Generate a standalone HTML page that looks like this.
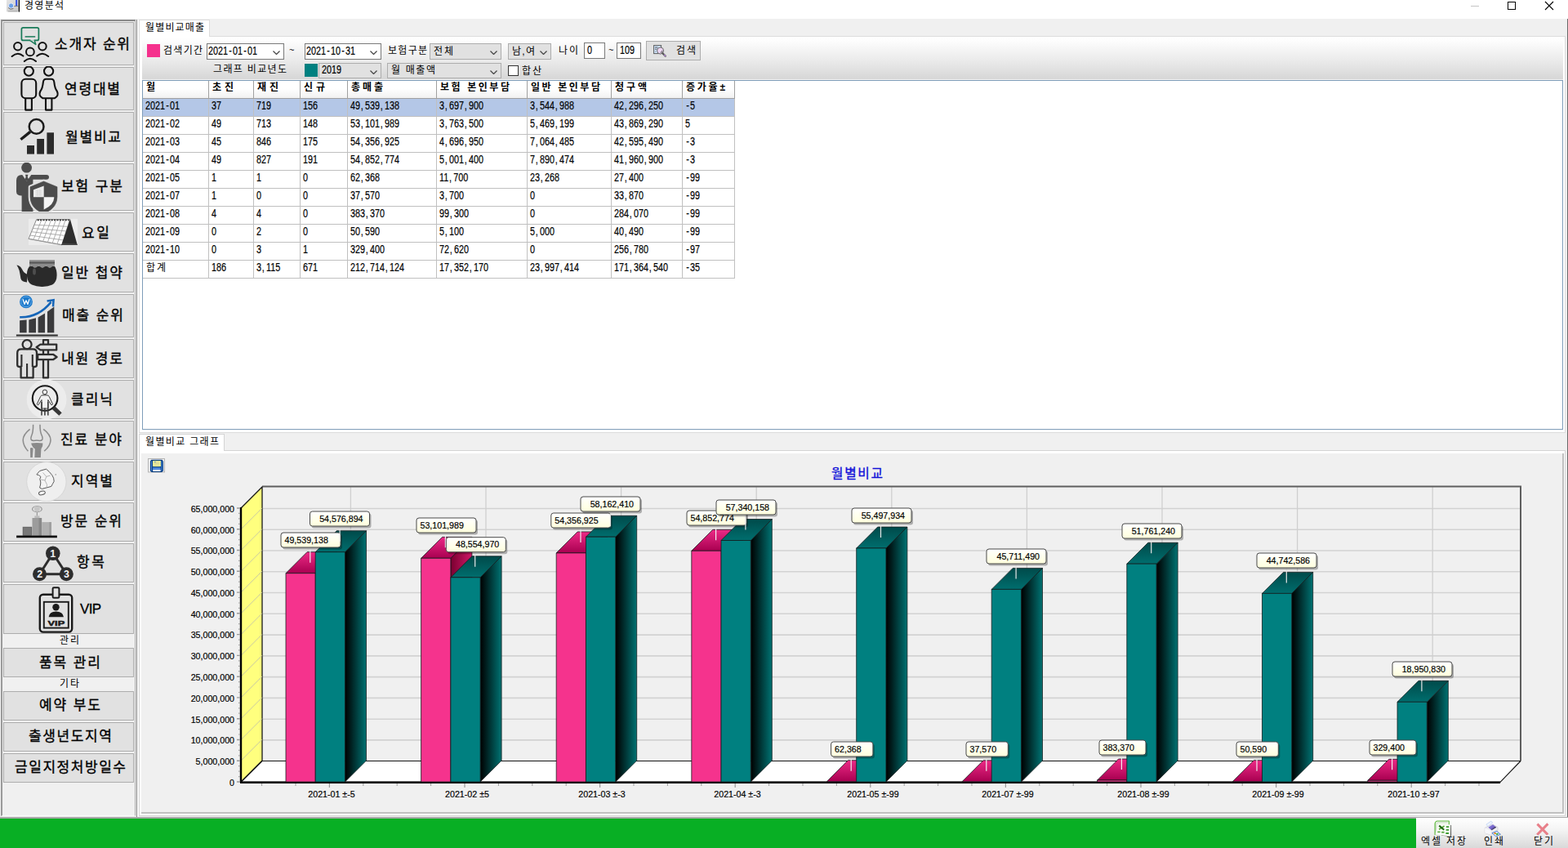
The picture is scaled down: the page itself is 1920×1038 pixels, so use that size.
<!DOCTYPE html><html><head><meta charset="utf-8"><title>경영분석</title><style>
*{box-sizing:border-box}
html,body{margin:0;padding:0}
html{overflow:hidden;width:1920px;height:1038px}
body{width:1920px;height:1038px;overflow:hidden;position:relative;background:#f0f0f0;font-family:"Liberation Sans",sans-serif;font-size:12px;color:#000}
.a{position:absolute}
.kt{position:absolute;overflow:visible;pointer-events:none}
.kt text{font-family:"Liberation Sans","Noto Sans CJK KR","NanumGothic",sans-serif;fill:#000;white-space:pre}
.btn{position:absolute;left:4px;width:160px;background:#e1e1e1;border:1px solid #adadad}
.cb{position:absolute;height:20px;border:1px solid #7a7a7a;background:#fff}
.cbg{position:absolute;border:1px solid #adadad;background:#e1e1e1}
.n{position:absolute;white-space:pre;font-size:14px;line-height:14px;-webkit-text-stroke:.2px #000;transform:scaleX(.771);transform-origin:0 0}
.n i{display:inline-block;width:7.78px;font-style:normal;text-align:center}
.n i.c{text-align:left;padding-left:1px}
.chev{position:absolute;width:9px;height:5px}
.th{position:absolute;top:0;height:22px;border-right:1px solid #a0a0a0;border-bottom:1px solid #a0a0a0;background:linear-gradient(#fff,#fff 45%,#f1f1f1)}
.row{position:absolute;left:0;width:725px;height:22px;border-bottom:1px solid #c0c0c0}
.cell{position:absolute;top:0;height:22px;border-right:1px solid #c0c0c0}
</style></head><body>
<div class="a" style="left:0;top:0;width:1920px;height:23px;background:#fff"></div>
<svg class="a" style="left:7px;top:0px" width="18" height="16" viewBox="7 0 18 16" ><defs><linearGradient id="tig" x1="0" x2="1" y1="0" y2="1"><stop offset="0" stop-color="#e6e6e6"/><stop offset="1" stop-color="#c4c4c4"/></linearGradient></defs><rect x="8" y="-1" width="15" height="15.6" rx="1" fill="url(#tig)"/><rect x="19.2" y="-1" width="2" height="8.4" fill="#3050e0"/><rect x="17.2" y="7" width="5" height="0.9" fill="#777"/><rect x="22.8" y="-1" width="1.2" height="15.6" fill="#000"/><circle cx="13.6" cy="7" r="3.1" fill="#6aa0e6" stroke="#f4f4ff" stroke-width=".8"/><path d="M10.2 9.5Q12.5 12.5 16.4 10.5" stroke="#666" stroke-width="1" fill="none"/><path d="M10 13.8H21.5" stroke="#aaa" stroke-width="1"/></svg>
<svg class="kt " role="img" aria-label="경영분석" style="left:26.6px;top:-1.0px" width="54" height="18" viewBox="0 0 54 18"><title>경영분석</title><text x="3" y="12" font-size="12" textLength="48" lengthAdjust="spacing">경영분석</text></svg>
<div class="a" style="left:1801px;top:7px;width:10px;height:1px;background:#c4c4c4"></div>
<div class="a" style="left:1846px;top:2px;width:10px;height:10px;border:1px solid #000"></div>
<svg class="a" style="left:1891px;top:1px" width="12" height="12" viewBox="0 0 12 12"><path d="M1 1L11 11M11 1L1 11" stroke="#000" stroke-width="1.1" fill="none"/></svg>
<div class="a" style="left:1918.8px;top:23px;width:1.2px;height:978px;background:#6a6a6a"></div>
<div class="a" style="left:1px;top:24px;width:165px;height:975px;border-left:2px solid #9a9a9a;border-top:2px solid #8a8a8a;border-right:1px solid #b0b0b0;border-bottom:1px solid #fafafa;background:#f0f0f0"></div>
<div class="a" style="left:166px;top:24px;width:1px;height:976px;background:#e8e8e8"></div>
<div class="a" style="left:167px;top:24px;width:1px;height:977px;background:#8a8a8a"></div>
<div class="a" style="left:168px;top:24px;width:2px;height:977px;background:#fafafa"></div>
<div class="a" style="left:0;top:1000px;width:1920px;height:2px;background:#a8a8a8"></div>
<div class="btn" style="top:27px;height:53px"></div>
<svg class="a" style="left:4px;top:26px" width="160" height="55" viewBox="4 26 160 55" ><defs><clipPath id="c_referrer"><rect x="4" y="26" width="160" height="55"/></clipPath></defs><g clip-path="url(#c_referrer)"><rect x="26.4" y="33.8" width="21" height="15.6" rx="2" fill="none" stroke="#187a58" stroke-width="1.7"/><path d="M36.6 49.4L43.8 54.4L42.2 49.4" fill="#e1e1e1" stroke="#187a58" stroke-width="1.5" stroke-linejoin="round"/><path d="M37.4 48.6H41.6" stroke="#e1e1e1" stroke-width="1.8"/><path d="M30.6 44.9H43.2" stroke="#187a58" stroke-width="1.5"/><circle cx="21.8" cy="56.8" r="4.7" fill="none" stroke="#111" stroke-width="2" stroke-linecap="round"/><circle cx="52" cy="56.8" r="4.7" fill="none" stroke="#111" stroke-width="2" stroke-linecap="round"/><circle cx="36.9" cy="63.4" r="4.9" fill="none" stroke="#111" stroke-width="2" stroke-linecap="round"/><path d="M14.6 69Q21.8 62.6 28.4 68.6" fill="none" stroke="#111" stroke-width="2" stroke-linecap="round"/><path d="M45.2 68.6Q52 62.6 59.2 69" fill="none" stroke="#111" stroke-width="2" stroke-linecap="round"/><path d="M29.8 75Q36.9 68.6 44 75" fill="none" stroke="#111" stroke-width="2" stroke-linecap="round"/></g></svg>
<svg class="kt " role="img" aria-label="소개자 순위" style="left:64.0px;top:44.3px" width="98" height="22" viewBox="0 0 98 22"><title>소개자 순위</title><text x="3" y="15.6" font-size="17" textLength="92" lengthAdjust="spacing" stroke="#000" stroke-width=".35">소개자 순위</text></svg>
<div class="btn" style="top:82px;height:53px"></div>
<svg class="a" style="left:4px;top:81px" width="160" height="55" viewBox="4 81 160 55" ><defs><clipPath id="c_age"><rect x="4" y="81" width="160" height="55"/></clipPath></defs><g clip-path="url(#c_age)"><circle cx="35.3" cy="87.1" r="5.6" fill="none" stroke="#111" stroke-width="2.1" stroke-linejoin="round"/><circle cx="59.6" cy="87.1" r="5.6" fill="none" stroke="#111" stroke-width="2.1" stroke-linejoin="round"/><rect x="26.4" y="96.8" width="17.8" height="23.4" rx="5" fill="none" stroke="#111" stroke-width="2.1" stroke-linejoin="round"/><path d="M31.2 120.2V134.6H38.9V120.2" fill="none" stroke="#111" stroke-width="2.1" stroke-linejoin="round"/><path d="M56.4 96.8H62.8Q66 96.8 66.4 101Q67 108 70 112Q72.4 117.4 66.8 120.2H52.4Q46.8 117.4 49.2 112Q52.2 108 52.8 101Q53.2 96.8 56.4 96.8Z" fill="none" stroke="#111" stroke-width="2.1" stroke-linejoin="round"/><path d="M56 120.2V134.6H63.4V120.2" fill="none" stroke="#111" stroke-width="2.1" stroke-linejoin="round"/></g></svg>
<svg class="kt " role="img" aria-label="연령대별" style="left:76.0px;top:98.9px" width="74" height="22" viewBox="0 0 74 22"><title>연령대별</title><text x="3" y="15.6" font-size="17" textLength="68" lengthAdjust="spacing" stroke="#000" stroke-width=".35">연령대별</text></svg>
<div class="btn" style="top:137px;height:61px"></div>
<svg class="a" style="left:4px;top:136px" width="160" height="63" viewBox="4 136 160 63" ><defs><clipPath id="c_monthly"><rect x="4" y="136" width="160" height="63"/></clipPath></defs><g clip-path="url(#c_monthly)"><circle cx="44.6" cy="154.9" r="8.9" fill="none" stroke="#1c1c1c" stroke-width="2.5"/><path d="M37 161.4L25.4 170.8" stroke="#1c1c1c" stroke-width="3.4" stroke-linecap="butt"/><rect x="33" y="178" width="9" height="10.6" fill="#2b2b2b"/><rect x="45.2" y="170" width="8.8" height="18.6" fill="#2b2b2b"/><rect x="57.4" y="162.3" width="8.6" height="26.3" fill="#2b2b2b"/></g></svg>
<svg class="kt " role="img" aria-label="월별비교" style="left:76.6px;top:157.7px" width="74" height="22" viewBox="0 0 74 22"><title>월별비교</title><text x="3" y="15.6" font-size="17" textLength="68" lengthAdjust="spacing" stroke="#000" stroke-width=".35">월별비교</text></svg>
<div class="btn" style="top:200px;height:58px"></div>
<svg class="a" style="left:4px;top:199px" width="160" height="60" viewBox="4 199 160 60" ><defs><clipPath id="c_insurance"><rect x="4" y="199" width="160" height="60"/></clipPath></defs><g clip-path="url(#c_insurance)"><circle cx="32.6" cy="205.2" r="6.4" fill="#4c4c4c"/><path d="M20 221Q20 213.9 27 213.9H57Q60 213.9 60 216.8Q60 219.8 57 219.8H40.4V259H26.6V239.6Q20 239.6 20 234.6Z" fill="#4c4c4c"/><path d="M26.9 213.6H38.6L32.7 222Z" fill="#e1e1e1"/><path d="M31 213.8H34.4L33.7 216.8L35.2 219.6L32.7 222L30.2 219.6L31.7 216.8Z" fill="#4c4c4c"/><path d="M53.5 222L70 228.8V241Q70 253 57.6 259.6H49.4Q37 253 37 241V228.8Z" fill="#e1e1e1" stroke="#e1e1e1" stroke-width="4.6" stroke-linejoin="round"/><path d="M53.5 222L70 228.8V241Q70 253 57.6 259.6H49.4Q37 253 37 241V228.8Z" fill="#4c4c4c" stroke="#4c4c4c" stroke-width=".6" stroke-linejoin="round"/><path d="M53.7 227.4L41 232.2V241.2H53.7Z" fill="#ececec"/><path d="M53.7 241.2H66.2V242.6Q65.6 250.6 55.4 255.6L53.7 256.4Z" fill="#f4f4f4"/><path d="M44 233.8H51.4M44 236.2H51.4M44 238.6H51.4M46 232.4V240M49 231.4V240" stroke="#d2d2d2" stroke-width=".7"/></g></svg>
<svg class="kt " role="img" aria-label="보험 구분" style="left:72.2px;top:218.4px" width="81" height="22" viewBox="0 0 81 22"><title>보험 구분</title><text x="3" y="15.6" font-size="17" textLength="75" lengthAdjust="spacing" stroke="#000" stroke-width=".35">보험 구분</text></svg>
<div class="btn" style="top:260px;height:48px"></div>
<svg class="a" style="left:4px;top:259px" width="160" height="50" viewBox="4 259 160 50" ><defs><clipPath id="c_calendar"><rect x="4" y="259" width="160" height="50"/></clipPath></defs><g clip-path="url(#c_calendar)"><rect x="34.9" y="267.9" width="60.2" height="32.1" fill="#ececec"/><path d="M44.7 268.6L85.6 268.6L75.8 299.8L35 292.4Z" fill="#fff" stroke="#7c7c7c" stroke-width=".9" stroke-linejoin="round"/><path d="M42.0 275.2L82.9 277.3M40.3 279.5L81.1 282.9M38.5 283.7L79.4 288.4M36.8 288.0L77.6 294.0M35.1 292.2L75.9 299.6M50.5 270.2L40.8 293.5M56.4 270.2L46.7 294.5M62.2 270.2L52.5 295.6M68.1 270.2L58.3 296.6M73.9 270.2L64.1 297.7M79.8 270.2L70.0 298.7" stroke="#9a9a9a" stroke-width=".8" fill="none"/><path d="M45.6 269.4H84.6" stroke="#3a3a3a" stroke-width="1.7" stroke-dasharray="2.2 1.2"/><path d="M85.9 268.3L94.8 300H75.2Z" fill="#2e2e2e"/><path d="M76.4 297.4L94 298.6L94.8 300H75.2Z" fill="#454545"/></g></svg>
<svg class="kt " role="img" aria-label="요일" style="left:97.4px;top:274.8px" width="40" height="22" viewBox="0 0 40 22"><title>요일</title><text x="3" y="15.6" font-size="17" textLength="34" lengthAdjust="spacing" stroke="#000" stroke-width=".35">요일</text></svg>
<div class="btn" style="top:310px;height:48px"></div>
<svg class="a" style="left:4px;top:309px" width="160" height="50" viewBox="4 309 160 50" ><defs><clipPath id="c_pot"><rect x="4" y="309" width="160" height="50"/></clipPath></defs><g clip-path="url(#c_pot)"><path d="M33.6 336Q29 334 27 329.5Q24.6 325 20.4 324.4Q22.4 327 23.6 331Q24.8 336.5 25.4 341Q27 345.5 33 345.4Z" fill="#2a2a2a"/><path d="M36 326Q32.4 331 33 338Q33.8 346 39 348.6Q45 351.2 52 351Q59 351 64 348.6Q69.6 345 69.6 337Q69.6 330 67 326Z" fill="#2a2a2a"/><ellipse cx="42" cy="332.6" rx="2" ry="4" fill="#4e4e4e"/><path d="M36 318.2H67V325.6Q64.6 325.2 62.6 327.2Q60.6 328.8 58.6 326.8Q56.4 324.8 54.2 326.8Q52 329 49.6 326.8Q47.4 324.8 45.2 326.8Q43 328.8 41 327Q38.6 324.8 36 326.6Z" fill="#8c8c8c"/><rect x="36" y="320.6" width="31" height="2" fill="#555"/></g></svg>
<svg class="kt " role="img" aria-label="일반 첩약" style="left:72.4px;top:323.6px" width="81" height="22" viewBox="0 0 81 22"><title>일반 첩약</title><text x="3" y="15.6" font-size="17" textLength="75" lengthAdjust="spacing" stroke="#000" stroke-width=".35">일반 첩약</text></svg>
<div class="btn" style="top:360px;height:53px"></div>
<svg class="a" style="left:4px;top:359px" width="160" height="55" viewBox="4 359 160 55" ><defs><clipPath id="c_sales"><rect x="4" y="359" width="160" height="55"/></clipPath></defs><g clip-path="url(#c_sales)"><path d="M24.1 392.2L32.6 391.6V407.3H24.1Z" fill="#3a3a3c"/><path d="M35.3 391.6L44 389.2V407.3H35.3Z" fill="#3a3a3c"/><path d="M46.6 388.6L55 383.4V407.3H46.6Z" fill="#3a3a3c"/><path d="M58 381.4L66.3 375.6V407.3H58Z" fill="#3a3a3c"/><path d="M19.9 410.4H70.8" stroke="#2a2a2a" stroke-width="2"/><path d="M24.2 388.2Q47 389 62.6 369.6" stroke="#1565b8" stroke-width="2.5" fill="none"/><path d="M57.6 368.6L65.6 367.2L65 375.4" stroke="#1565b8" stroke-width="2.5" fill="none" stroke-linejoin="miter"/><circle cx="32" cy="369.4" r="7.9" fill="#1c7acc"/><circle cx="32" cy="369.4" r="6.2" fill="none" stroke="#8cc0ee" stroke-width=".6"/><path d="M28.2 366.6L30 372.4L32 367.8L34 372.4L35.8 366.6" stroke="#fff" stroke-width="1.3" fill="none" stroke-linejoin="round" stroke-linecap="round"/></g></svg>
<svg class="kt " role="img" aria-label="매출 순위" style="left:73.0px;top:376.3px" width="81" height="22" viewBox="0 0 81 22"><title>매출 순위</title><text x="3" y="15.6" font-size="17" textLength="75" lengthAdjust="spacing" stroke="#000" stroke-width=".35">매출 순위</text></svg>
<div class="btn" style="top:415px;height:48px"></div>
<svg class="a" style="left:4px;top:414px" width="160" height="50" viewBox="4 414 160 50" ><defs><clipPath id="c_route"><rect x="4" y="414" width="160" height="50"/></clipPath></defs><g clip-path="url(#c_route)"><circle cx="33.1" cy="421.6" r="5.5" fill="none" stroke="#2e2e2e" stroke-width="2.3" stroke-linejoin="round"/><path d="M26 427.4H40.4Q45 427.4 45 432V446.6Q45 449 42.4 449H40.6V462.4H25.6V449H23.8Q21.2 449 21.2 446.6V432Q21.2 427.4 26 427.4Z" fill="none" stroke="#2e2e2e" stroke-width="2.3" stroke-linejoin="round"/><path d="M26.4 434V449M39.8 434V449M33.1 445V462.4" stroke="#2e2e2e" stroke-width="2.1" fill="none"/><path d="M53 416.2H59V462.4H53Z" fill="#e1e1e1" stroke="#2e2e2e" stroke-width="2.3" stroke-linejoin="round"/><path d="M44.6 425L49.4 421.6H69.2V428.4H49.4Z" fill="#e1e1e1" stroke="#2e2e2e" stroke-width="2.3" stroke-linejoin="round"/><path d="M46.2 433.8H65L69.6 437L65 440.2H46.2Z" fill="#e1e1e1" stroke="#2e2e2e" stroke-width="2.3" stroke-linejoin="round"/></g></svg>
<svg class="kt " role="img" aria-label="내원 경로" style="left:72.0px;top:429.0px" width="81" height="22" viewBox="0 0 81 22"><title>내원 경로</title><text x="3" y="15.6" font-size="17" textLength="75" lengthAdjust="spacing" stroke="#000" stroke-width=".35">내원 경로</text></svg>
<div class="btn" style="top:465px;height:48px"></div>
<svg class="a" style="left:4px;top:464px" width="160" height="50" viewBox="4 464 160 50" ><defs><clipPath id="c_clinic"><rect x="4" y="464" width="160" height="50"/></clipPath></defs><g clip-path="url(#c_clinic)"><circle cx="57.1" cy="488.8" r="24.4" fill="#ececec"/><circle cx="55.1" cy="487.5" r="15.3" fill="none" stroke="#1a1a1a" stroke-width="2.1"/><path d="M65.6 499.2L74 507" stroke="#383838" stroke-width="5"/><circle cx="54.9" cy="479.9" r="2.8" fill="#f2f2f2" stroke="#3a3a3a" stroke-width="1" stroke-linejoin="round"/><path d="M52 483.8H57.8Q59.4 483.8 60.2 485.4L64.6 494.8L63 495.8L58.8 489.4V500H51V489.4L46.8 495.8L45.2 494.8L49.6 485.4Q50.4 483.8 52 483.8Z" fill="#f2f2f2" stroke="#3a3a3a" stroke-width="1" stroke-linejoin="round"/><path d="M51 492V508.4M54.9 499.5V508.4M58.8 492V508.4" stroke="#3a3a3a" stroke-width="1.5"/></g></svg>
<svg class="kt " role="img" aria-label="클리닉" style="left:84.2px;top:479.0px" width="57" height="22" viewBox="0 0 57 22"><title>클리닉</title><text x="3" y="15.6" font-size="17" textLength="51" lengthAdjust="spacing" stroke="#000" stroke-width=".35">클리닉</text></svg>
<div class="btn" style="top:515px;height:48px"></div>
<svg class="a" style="left:4px;top:514px" width="160" height="50" viewBox="4 514 160 50" ><defs><clipPath id="c_joint"><rect x="4" y="514" width="160" height="50"/></clipPath></defs><g clip-path="url(#c_joint)"><path d="M40.6 519.8Q40.8 529 38.4 534Q36.4 539 41 539.6Q45 538.6 49 539.6Q53.4 539 51.6 534Q48.8 529 49 519.8" fill="none" stroke="#8a8a8a" stroke-width="1.5"/><path d="M38.2 542.4Q45 541.4 52.4 542.4Q52.8 546 50.4 549.6L49.8 560H42.4L42.8 549.6Q38.6 546 38.2 542.4Z" fill="#8a8a8a"/><path d="M37 548.6Q38.6 547.4 40.6 548.8L39.8 560H37.2Z" fill="#8a8a8a"/><path d="M36.6 525.4Q28.2 532 28.2 538.8Q28.4 546 34.4 552.2" fill="none" stroke="#8e8e8e" stroke-width="1.6"/><path d="M53.2 525.4Q62 532 62 538.8Q61.8 546 54.2 552.2" fill="none" stroke="#8e8e8e" stroke-width="1.6"/></g></svg>
<svg class="kt " role="img" aria-label="진료 분야" style="left:71.4px;top:528.2px" width="81" height="22" viewBox="0 0 81 22"><title>진료 분야</title><text x="3" y="15.6" font-size="17" textLength="75" lengthAdjust="spacing" stroke="#000" stroke-width=".35">진료 분야</text></svg>
<div class="btn" style="top:565px;height:48px"></div>
<svg class="a" style="left:4px;top:564px" width="160" height="50" viewBox="4 564 160 50" ><defs><clipPath id="c_region"><rect x="4" y="564" width="160" height="50"/></clipPath></defs><g clip-path="url(#c_region)"><circle cx="56.9" cy="589.6" r="24.2" fill="#efefef" stroke="#d2d2d2" stroke-width=".8"/><path d="M44.9 580.9L48.4 576.6L52 575.4L56.6 574.2L60.2 577.4L63.6 581.4L65.6 585.2L66.2 589.2L64.4 592.4L62.8 595.4L57.6 596.8L51.4 598.4L48.6 597L49.6 593L49.8 590L48.8 586.4L50 583.6L47.6 581.6Z" fill="#f4f4f4" stroke="#5a5a5a" stroke-width="1" stroke-linejoin="round"/><path d="M52.6 578.6L56.8 583.4L61.6 582M56.8 583.4L55 588L57.6 593.4M55 588L50 587M57.6 593.4L57 596.8" stroke="#8a8a8a" stroke-width=".6" fill="none"/><ellipse cx="51.4" cy="603.4" rx="4" ry="2.2" transform="rotate(-16 51.4 603.4)" fill="#f4f4f4" stroke="#5a5a5a" stroke-width="1" stroke-linejoin="round"/><circle cx="68.2" cy="580.9" r=".7" fill="#777"/></g></svg>
<svg class="kt " role="img" aria-label="지역별" style="left:84.2px;top:579.0px" width="57" height="22" viewBox="0 0 57 22"><title>지역별</title><text x="3" y="15.6" font-size="17" textLength="51" lengthAdjust="spacing" stroke="#000" stroke-width=".35">지역별</text></svg>
<div class="btn" style="top:615px;height:48px"></div>
<svg class="a" style="left:4px;top:614px" width="160" height="50" viewBox="4 614 160 50" ><defs><clipPath id="c_visit"><rect x="4" y="614" width="160" height="50"/></clipPath></defs><g clip-path="url(#c_visit)"><rect x="27.7" y="644.8" width="11.6" height="11" fill="#6a6a6a"/><rect x="29" y="646" width="9" height="9.8" fill="#787878"/><rect x="39.5" y="634" width="11.6" height="21.8" fill="#9c9c9c"/><rect x="47.6" y="634" width="3.5" height="21.8" fill="#888"/><rect x="51.2" y="639.1" width="11.8" height="16.7" fill="#b0b0b0"/><rect x="60" y="639.1" width="3" height="16.7" fill="#a0a0a0"/><path d="M20.1 656.9H69.9" stroke="#111" stroke-width="2.6"/><ellipse cx="45.4" cy="623.2" rx="5.8" ry="3.4" fill="none" stroke="#8e8e8e" stroke-width="1.1"/><path d="M42 619.8H48.8V623Q48.6 626.6 45.4 627Q42.2 626.6 42 623Z" fill="#c6c6c6"/><path d="M45.4 626.8V631.6" stroke="#9a9a9a" stroke-width="1.2"/><rect x="42.3" y="631.4" width="6.2" height="2.6" fill="#bcbcbc"/></g></svg>
<svg class="kt " role="img" aria-label="방문 순위" style="left:70.8px;top:628.2px" width="81" height="22" viewBox="0 0 81 22"><title>방문 순위</title><text x="3" y="15.6" font-size="17" textLength="75" lengthAdjust="spacing" stroke="#000" stroke-width=".35">방문 순위</text></svg>
<div class="btn" style="top:665px;height:48px"></div>
<svg class="a" style="left:4px;top:664px" width="160" height="50" viewBox="4 664 160 50" ><defs><clipPath id="c_items"><rect x="4" y="664" width="160" height="50"/></clipPath></defs><g clip-path="url(#c_items)"><path d="M64.8 677.3L48.5 702.7H81.3Z" fill="none" stroke="#2d2d2d" stroke-width="3"/><circle cx="64.8" cy="677.3" r="8.8" fill="#2d2d2d"/><circle cx="48.5" cy="702.7" r="8.5" fill="#2d2d2d"/><circle cx="81.3" cy="702.7" r="8.5" fill="#2d2d2d"/><text x="64.6" y="681.8" font-family="Liberation Sans,sans-serif" font-weight="bold" font-size="12.4" fill="#f4f4f4" text-anchor="middle">1</text><text x="48.7" y="707.2" font-family="Liberation Sans,sans-serif" font-weight="bold" font-size="12.4" fill="#f4f4f4" text-anchor="middle">2</text><text x="81.4" y="707.2" font-family="Liberation Sans,sans-serif" font-weight="bold" font-size="12.4" fill="#f4f4f4" text-anchor="middle">3</text></g></svg>
<svg class="kt " role="img" aria-label="항목" style="left:91.2px;top:678.0px" width="40" height="22" viewBox="0 0 40 22"><title>항목</title><text x="3" y="15.6" font-size="17" textLength="34" lengthAdjust="spacing" stroke="#000" stroke-width=".35">항목</text></svg>
<div class="btn" style="top:715px;height:61px"></div>
<svg class="a" style="left:4px;top:714px" width="160" height="63" viewBox="4 714 160 63" ><defs><clipPath id="c_vip"><rect x="4" y="714" width="160" height="63"/></clipPath></defs><g clip-path="url(#c_vip)"><rect x="48.8" y="727.8" width="39.4" height="45.8" rx="4" fill="none" stroke="#1a1a1a" stroke-width="2.4"/><rect x="64.6" y="719.2" width="7.8" height="12.6" rx="1.4" fill="#e1e1e1" stroke="#1a1a1a" stroke-width="2"/><rect x="53.8" y="736.8" width="30" height="31.8" fill="none" stroke="#1a1a1a" stroke-width="1.9"/><circle cx="68.5" cy="743.3" r="4.2" fill="#1a1a1a"/><path d="M59.6 755.2Q60.4 748.4 68.6 748.4Q77 748.4 78 755.2Z" fill="#1a1a1a"/><text x="68.9" y="765.6" font-family="Liberation Sans,sans-serif" font-weight="bold" font-size="9.6" fill="#1a1a1a" stroke="#1a1a1a" stroke-width=".5" textLength="20.6" lengthAdjust="spacingAndGlyphs" text-anchor="middle">VIP</text></g></svg>
<div class="a" style="left:98px;top:735.5px;font-size:17px;line-height:20px;letter-spacing:-0.6px;-webkit-text-stroke:.3px #000">VIP</div>
<svg class="kt " role="img" aria-label="관리" style="left:69.5px;top:775.5px" width="30" height="18" viewBox="0 0 30 18"><title>관리</title><text x="3" y="12" font-size="12" textLength="24" lengthAdjust="spacing">관리</text></svg>
<svg class="kt " role="img" aria-label="기타" style="left:70.0px;top:828.5px" width="30" height="18" viewBox="0 0 30 18"><title>기타</title><text x="3" y="12" font-size="12" textLength="24" lengthAdjust="spacing">기타</text></svg>
<div class="btn" style="top:793px;height:36px"></div>
<svg class="kt " role="img" aria-label="품목 관리" style="left:45.4px;top:800.6px" width="81" height="22" viewBox="0 0 81 22"><title>품목 관리</title><text x="3" y="15.6" font-size="17" textLength="75" lengthAdjust="spacing" stroke="#000" stroke-width=".35">품목 관리</text></svg>
<div class="btn" style="top:846px;height:36px"></div>
<svg class="kt " role="img" aria-label="예약 부도" style="left:45.2px;top:853.4px" width="81" height="22" viewBox="0 0 81 22"><title>예약 부도</title><text x="3" y="15.6" font-size="17" textLength="75" lengthAdjust="spacing" stroke="#000" stroke-width=".35">예약 부도</text></svg>
<div class="btn" style="top:884px;height:36px"></div>
<svg class="kt " role="img" aria-label="출생년도지역" style="left:31.6px;top:890.8px" width="108" height="22" viewBox="0 0 108 22"><title>출생년도지역</title><text x="3" y="15.6" font-size="17" textLength="102" lengthAdjust="spacing" stroke="#000" stroke-width=".35">출생년도지역</text></svg>
<div class="btn" style="top:922px;height:36px"></div>
<svg class="kt " role="img" aria-label="금일지정처방일수" style="left:14.8px;top:929.0px" width="142" height="22" viewBox="0 0 142 22"><title>금일지정처방일수</title><text x="3" y="15.6" font-size="17" textLength="136" lengthAdjust="spacing" stroke="#000" stroke-width=".35">금일지정처방일수</text></svg>
<div class="a" style="left:170px;top:44px;width:1747px;height:486px;background:#fff;border:1px solid #dcdcdc"></div>
<div class="a" style="left:170px;top:24px;width:87px;height:21px;background:#fff;border:1px solid #dcdcdc;border-bottom:none"></div>
<svg class="kt " role="img" aria-label="월별비교매출" style="left:175.0px;top:26.0px" width="78" height="18" viewBox="0 0 78 18"><title>월별비교매출</title><text x="3" y="12" font-size="12" textLength="72" lengthAdjust="spacing">월별비교매출</text></svg>
<div class="a" style="left:174px;top:46px;width:1740px;height:52px;background:linear-gradient(#fff 0,#fdfdfd 8%,#f4f4f4 30%,#e8e8e8 60%,#d8d8d8 94%,#d6d6d6 97%,#f2f2f2 98.5%,#f2f2f2 100%)"></div>
<div class="a" style="left:180px;top:54px;width:16px;height:16px;background:#f5318d"></div>
<svg class="kt " role="img" aria-label="검색기간" style="left:197.0px;top:54.0px" width="54" height="18" viewBox="0 0 54 18"><title>검색기간</title><text x="3" y="12" font-size="12" textLength="48" lengthAdjust="spacing">검색기간</text></svg>
<div class="cb" style="left:253px;top:53px;width:95px"><span class="n" style="left:0.8px;top:0.8px">2021<i>-</i>01<i>-</i>01</span><svg class="chev" style="right:4.5px;top:7.5px" viewBox="0 0 9 5"><path d="M0.5 0.5L4.5 4.5L8.5 0.5" stroke="#444" stroke-width="1.2" fill="none"/></svg></div>
<div class="a" style="left:354px;top:55px;font-size:11px">~</div>
<div class="cb" style="left:373px;top:53px;width:94px"><span class="n" style="left:0.8px;top:0.8px">2021<i>-</i>10<i>-</i>31</span><svg class="chev" style="right:4.5px;top:7.5px" viewBox="0 0 9 5"><path d="M0.5 0.5L4.5 4.5L8.5 0.5" stroke="#444" stroke-width="1.2" fill="none"/></svg></div>
<svg class="kt " role="img" aria-label="보험구분" style="left:472.0px;top:54.0px" width="54" height="18" viewBox="0 0 54 18"><title>보험구분</title><text x="3" y="12" font-size="12" textLength="48" lengthAdjust="spacing">보험구분</text></svg>
<div class="cbg" style="left:526px;top:53px;width:88px;height:20px"><svg class="chev" style="right:4.5px;top:7.5px" viewBox="0 0 9 5"><path d="M0.5 0.5L4.5 4.5L8.5 0.5" stroke="#444" stroke-width="1.2" fill="none"/></svg></div>
<svg class="kt " role="img" aria-label="전체" style="left:528.0px;top:55.0px" width="30" height="18" viewBox="0 0 30 18"><title>전체</title><text x="3" y="12" font-size="12" textLength="24" lengthAdjust="spacing">전체</text></svg>
<div class="cbg" style="left:622px;top:53px;width:53px;height:20px"><svg class="chev" style="right:4.5px;top:7.5px" viewBox="0 0 9 5"><path d="M0.5 0.5L4.5 4.5L8.5 0.5" stroke="#444" stroke-width="1.2" fill="none"/></svg></div>
<svg class="kt " role="img" aria-label="남,여" style="left:624.0px;top:55.0px" width="34" height="18" viewBox="0 0 34 18"><title>남,여</title><text x="3" y="12" font-size="12" textLength="28" lengthAdjust="spacing">남,여</text></svg>
<svg class="kt " role="img" aria-label="나이" style="left:681.0px;top:54.0px" width="30" height="18" viewBox="0 0 30 18"><title>나이</title><text x="3" y="12" font-size="12" textLength="24" lengthAdjust="spacing">나이</text></svg>
<div class="cb" style="left:715px;top:52px;width:26px"><span class="n" style="left:3px;top:1px">0</span></div>
<div class="a" style="left:745px;top:55px;font-size:11px">~</div>
<div class="cb" style="left:755px;top:52px;width:30px"><span class="n" style="left:3px;top:1px">109</span></div>
<div class="cbg" style="left:791px;top:50px;width:67px;height:24px"></div>
<svg class="a" style="left:798px;top:53px" width="20" height="18" viewBox="798 53 20 18" ><rect x="800.6" y="55.6" width="9" height="10" fill="#cfe4fb" stroke="#5a5a5a" stroke-width="1"/><path d="M802 58H805.4M802 60.2H804.4M802.4 63H803.2" stroke="#444" stroke-width=".9"/><circle cx="808.6" cy="62" r="4" fill="#efd8f6" stroke="#6a6a6a" stroke-width="1"/><path d="M808.4 64H810.8V61.6" stroke="#555" stroke-width=".9" fill="none"/><path d="M811.4 65.2L814.8 68.6" stroke="#555" stroke-width="2.2" stroke-linecap="round"/><path d="M813.4 67.2L814.8 68.6" stroke="#b48cd0" stroke-width="1.4" stroke-linecap="round"/></svg>
<svg class="kt " role="img" aria-label="검색" style="left:825.0px;top:54.0px" width="30" height="18" viewBox="0 0 30 18"><title>검색</title><text x="3" y="12" font-size="12" textLength="24" lengthAdjust="spacing">검색</text></svg>
<svg class="kt " role="img" aria-label="그래프 비교년도" style="left:258.0px;top:77.0px" width="96" height="18" viewBox="0 0 96 18"><title>그래프 비교년도</title><text x="3" y="12" font-size="12" textLength="90" lengthAdjust="spacing">그래프 비교년도</text></svg>
<div class="a" style="left:373px;top:78px;width:16px;height:16px;background:#008080"></div>
<div class="cbg" style="left:390px;top:77px;width:77px;height:19px"><span class="n" style="left:3px;top:0.2px">2019</span><svg class="chev" style="right:4.5px;top:7.5px" viewBox="0 0 9 5"><path d="M0.5 0.5L4.5 4.5L8.5 0.5" stroke="#444" stroke-width="1.2" fill="none"/></svg></div>
<div class="cbg" style="left:474px;top:77px;width:140px;height:19px"><svg class="chev" style="right:4.5px;top:7.5px" viewBox="0 0 9 5"><path d="M0.5 0.5L4.5 4.5L8.5 0.5" stroke="#444" stroke-width="1.2" fill="none"/></svg></div>
<svg class="kt " role="img" aria-label="월 매출액" style="left:476.0px;top:78.0px" width="60" height="18" viewBox="0 0 60 18"><title>월 매출액</title><text x="3" y="12" font-size="12" textLength="54" lengthAdjust="spacing">월 매출액</text></svg>
<div class="a" style="left:622px;top:80px;width:13px;height:13px;background:#fff;border:1px solid #333"></div>
<svg class="kt " role="img" aria-label="합산" style="left:636.0px;top:79.0px" width="30" height="18" viewBox="0 0 30 18"><title>합산</title><text x="3" y="12" font-size="12" textLength="24" lengthAdjust="spacing">합산</text></svg>
<div class="a" style="left:174px;top:98px;width:1740px;height:428px;background:#fff;border:1px solid #7f9db9"></div>
<div class="a" style="left:175px;top:99px;width:725px;height:242px">
<div class="th" style="left:0px;width:81px"></div>
<svg class="kt " role="img" aria-label="월" style="left:1.4px;top:0.3px" width="19" height="18" viewBox="0 0 19 18"><title>월</title><text x="3" y="12" font-size="12" font-weight="bold">월</text></svg>
<div class="th" style="left:81px;width:55px"></div>
<svg class="kt " role="img" aria-label="초진" style="left:82.4px;top:0.3px" width="32" height="18" viewBox="0 0 32 18"><title>초진</title><text x="3" y="12" font-size="12" font-weight="bold" textLength="26" lengthAdjust="spacing">초진</text></svg>
<div class="th" style="left:136px;width:57px"></div>
<svg class="kt " role="img" aria-label="재진" style="left:137.4px;top:0.3px" width="32" height="18" viewBox="0 0 32 18"><title>재진</title><text x="3" y="12" font-size="12" font-weight="bold" textLength="26" lengthAdjust="spacing">재진</text></svg>
<div class="th" style="left:193px;width:58px"></div>
<svg class="kt " role="img" aria-label="신규" style="left:194.4px;top:0.3px" width="32" height="18" viewBox="0 0 32 18"><title>신규</title><text x="3" y="12" font-size="12" font-weight="bold" textLength="26" lengthAdjust="spacing">신규</text></svg>
<div class="th" style="left:251px;width:109px"></div>
<svg class="kt " role="img" aria-label="총매출" style="left:252.4px;top:0.3px" width="45" height="18" viewBox="0 0 45 18"><title>총매출</title><text x="3" y="12" font-size="12" font-weight="bold" textLength="39" lengthAdjust="spacing">총매출</text></svg>
<div class="th" style="left:360px;width:111px"></div>
<svg class="kt " role="img" aria-label="보험 본인부담" style="left:361.4px;top:0.3px" width="91" height="18" viewBox="0 0 91 18"><title>보험 본인부담</title><text x="3" y="12" font-size="12" font-weight="bold" textLength="85" lengthAdjust="spacing">보험 본인부담</text></svg>
<div class="th" style="left:471px;width:103px"></div>
<svg class="kt " role="img" aria-label="일반 본인부담" style="left:472.4px;top:0.3px" width="91" height="18" viewBox="0 0 91 18"><title>일반 본인부담</title><text x="3" y="12" font-size="12" font-weight="bold" textLength="85" lengthAdjust="spacing">일반 본인부담</text></svg>
<div class="th" style="left:574px;width:87px"></div>
<svg class="kt " role="img" aria-label="청구액" style="left:575.4px;top:0.3px" width="45" height="18" viewBox="0 0 45 18"><title>청구액</title><text x="3" y="12" font-size="12" font-weight="bold" textLength="39" lengthAdjust="spacing">청구액</text></svg>
<div class="th" style="left:661px;width:64px"></div>
<svg class="kt " role="img" aria-label="증가율±" style="left:662.4px;top:0.3px" width="56" height="18" viewBox="0 0 56 18"><title>증가율±</title><text x="3" y="12" font-size="12" font-weight="bold" textLength="48" lengthAdjust="spacing">증가율±</text></svg>
<div class="row" style="top:22px;background:#b4c7e7">
<div class="cell" style="left:0px;width:81px">
<span class="n" style="left:3.2px;top:0.6px">2021<i>-</i>01</span>
</div>
<div class="cell" style="left:81px;width:55px">
<span class="n" style="left:3.2px;top:0.6px">37</span>
</div>
<div class="cell" style="left:136px;width:57px">
<span class="n" style="left:3.2px;top:0.6px">719</span>
</div>
<div class="cell" style="left:193px;width:58px">
<span class="n" style="left:3.2px;top:0.6px">156</span>
</div>
<div class="cell" style="left:251px;width:109px">
<span class="n" style="left:3.2px;top:0.6px">49<i class="c">,</i>539<i class="c">,</i>138</span>
</div>
<div class="cell" style="left:360px;width:111px">
<span class="n" style="left:3.2px;top:0.6px">3<i class="c">,</i>697<i class="c">,</i>900</span>
</div>
<div class="cell" style="left:471px;width:103px">
<span class="n" style="left:3.2px;top:0.6px">3<i class="c">,</i>544<i class="c">,</i>988</span>
</div>
<div class="cell" style="left:574px;width:87px">
<span class="n" style="left:3.2px;top:0.6px">42<i class="c">,</i>296<i class="c">,</i>250</span>
</div>
<div class="cell" style="left:661px;width:64px">
<span class="n" style="left:3.2px;top:0.6px"><i>-</i>5</span>
</div>
</div>
<div class="row" style="top:44px;background:#fff">
<div class="cell" style="left:0px;width:81px">
<span class="n" style="left:3.2px;top:0.6px">2021<i>-</i>02</span>
</div>
<div class="cell" style="left:81px;width:55px">
<span class="n" style="left:3.2px;top:0.6px">49</span>
</div>
<div class="cell" style="left:136px;width:57px">
<span class="n" style="left:3.2px;top:0.6px">713</span>
</div>
<div class="cell" style="left:193px;width:58px">
<span class="n" style="left:3.2px;top:0.6px">148</span>
</div>
<div class="cell" style="left:251px;width:109px">
<span class="n" style="left:3.2px;top:0.6px">53<i class="c">,</i>101<i class="c">,</i>989</span>
</div>
<div class="cell" style="left:360px;width:111px">
<span class="n" style="left:3.2px;top:0.6px">3<i class="c">,</i>763<i class="c">,</i>500</span>
</div>
<div class="cell" style="left:471px;width:103px">
<span class="n" style="left:3.2px;top:0.6px">5<i class="c">,</i>469<i class="c">,</i>199</span>
</div>
<div class="cell" style="left:574px;width:87px">
<span class="n" style="left:3.2px;top:0.6px">43<i class="c">,</i>869<i class="c">,</i>290</span>
</div>
<div class="cell" style="left:661px;width:64px">
<span class="n" style="left:3.2px;top:0.6px">5</span>
</div>
</div>
<div class="row" style="top:66px;background:#fff">
<div class="cell" style="left:0px;width:81px">
<span class="n" style="left:3.2px;top:0.6px">2021<i>-</i>03</span>
</div>
<div class="cell" style="left:81px;width:55px">
<span class="n" style="left:3.2px;top:0.6px">45</span>
</div>
<div class="cell" style="left:136px;width:57px">
<span class="n" style="left:3.2px;top:0.6px">846</span>
</div>
<div class="cell" style="left:193px;width:58px">
<span class="n" style="left:3.2px;top:0.6px">175</span>
</div>
<div class="cell" style="left:251px;width:109px">
<span class="n" style="left:3.2px;top:0.6px">54<i class="c">,</i>356<i class="c">,</i>925</span>
</div>
<div class="cell" style="left:360px;width:111px">
<span class="n" style="left:3.2px;top:0.6px">4<i class="c">,</i>696<i class="c">,</i>950</span>
</div>
<div class="cell" style="left:471px;width:103px">
<span class="n" style="left:3.2px;top:0.6px">7<i class="c">,</i>064<i class="c">,</i>485</span>
</div>
<div class="cell" style="left:574px;width:87px">
<span class="n" style="left:3.2px;top:0.6px">42<i class="c">,</i>595<i class="c">,</i>490</span>
</div>
<div class="cell" style="left:661px;width:64px">
<span class="n" style="left:3.2px;top:0.6px"><i>-</i>3</span>
</div>
</div>
<div class="row" style="top:88px;background:#fff">
<div class="cell" style="left:0px;width:81px">
<span class="n" style="left:3.2px;top:0.6px">2021<i>-</i>04</span>
</div>
<div class="cell" style="left:81px;width:55px">
<span class="n" style="left:3.2px;top:0.6px">49</span>
</div>
<div class="cell" style="left:136px;width:57px">
<span class="n" style="left:3.2px;top:0.6px">827</span>
</div>
<div class="cell" style="left:193px;width:58px">
<span class="n" style="left:3.2px;top:0.6px">191</span>
</div>
<div class="cell" style="left:251px;width:109px">
<span class="n" style="left:3.2px;top:0.6px">54<i class="c">,</i>852<i class="c">,</i>774</span>
</div>
<div class="cell" style="left:360px;width:111px">
<span class="n" style="left:3.2px;top:0.6px">5<i class="c">,</i>001<i class="c">,</i>400</span>
</div>
<div class="cell" style="left:471px;width:103px">
<span class="n" style="left:3.2px;top:0.6px">7<i class="c">,</i>890<i class="c">,</i>474</span>
</div>
<div class="cell" style="left:574px;width:87px">
<span class="n" style="left:3.2px;top:0.6px">41<i class="c">,</i>960<i class="c">,</i>900</span>
</div>
<div class="cell" style="left:661px;width:64px">
<span class="n" style="left:3.2px;top:0.6px"><i>-</i>3</span>
</div>
</div>
<div class="row" style="top:110px;background:#fff">
<div class="cell" style="left:0px;width:81px">
<span class="n" style="left:3.2px;top:0.6px">2021<i>-</i>05</span>
</div>
<div class="cell" style="left:81px;width:55px">
<span class="n" style="left:3.2px;top:0.6px">1</span>
</div>
<div class="cell" style="left:136px;width:57px">
<span class="n" style="left:3.2px;top:0.6px">1</span>
</div>
<div class="cell" style="left:193px;width:58px">
<span class="n" style="left:3.2px;top:0.6px">0</span>
</div>
<div class="cell" style="left:251px;width:109px">
<span class="n" style="left:3.2px;top:0.6px">62<i class="c">,</i>368</span>
</div>
<div class="cell" style="left:360px;width:111px">
<span class="n" style="left:3.2px;top:0.6px">11<i class="c">,</i>700</span>
</div>
<div class="cell" style="left:471px;width:103px">
<span class="n" style="left:3.2px;top:0.6px">23<i class="c">,</i>268</span>
</div>
<div class="cell" style="left:574px;width:87px">
<span class="n" style="left:3.2px;top:0.6px">27<i class="c">,</i>400</span>
</div>
<div class="cell" style="left:661px;width:64px">
<span class="n" style="left:3.2px;top:0.6px"><i>-</i>99</span>
</div>
</div>
<div class="row" style="top:132px;background:#fff">
<div class="cell" style="left:0px;width:81px">
<span class="n" style="left:3.2px;top:0.6px">2021<i>-</i>07</span>
</div>
<div class="cell" style="left:81px;width:55px">
<span class="n" style="left:3.2px;top:0.6px">1</span>
</div>
<div class="cell" style="left:136px;width:57px">
<span class="n" style="left:3.2px;top:0.6px">0</span>
</div>
<div class="cell" style="left:193px;width:58px">
<span class="n" style="left:3.2px;top:0.6px">0</span>
</div>
<div class="cell" style="left:251px;width:109px">
<span class="n" style="left:3.2px;top:0.6px">37<i class="c">,</i>570</span>
</div>
<div class="cell" style="left:360px;width:111px">
<span class="n" style="left:3.2px;top:0.6px">3<i class="c">,</i>700</span>
</div>
<div class="cell" style="left:471px;width:103px">
<span class="n" style="left:3.2px;top:0.6px">0</span>
</div>
<div class="cell" style="left:574px;width:87px">
<span class="n" style="left:3.2px;top:0.6px">33<i class="c">,</i>870</span>
</div>
<div class="cell" style="left:661px;width:64px">
<span class="n" style="left:3.2px;top:0.6px"><i>-</i>99</span>
</div>
</div>
<div class="row" style="top:154px;background:#fff">
<div class="cell" style="left:0px;width:81px">
<span class="n" style="left:3.2px;top:0.6px">2021<i>-</i>08</span>
</div>
<div class="cell" style="left:81px;width:55px">
<span class="n" style="left:3.2px;top:0.6px">4</span>
</div>
<div class="cell" style="left:136px;width:57px">
<span class="n" style="left:3.2px;top:0.6px">4</span>
</div>
<div class="cell" style="left:193px;width:58px">
<span class="n" style="left:3.2px;top:0.6px">0</span>
</div>
<div class="cell" style="left:251px;width:109px">
<span class="n" style="left:3.2px;top:0.6px">383<i class="c">,</i>370</span>
</div>
<div class="cell" style="left:360px;width:111px">
<span class="n" style="left:3.2px;top:0.6px">99<i class="c">,</i>300</span>
</div>
<div class="cell" style="left:471px;width:103px">
<span class="n" style="left:3.2px;top:0.6px">0</span>
</div>
<div class="cell" style="left:574px;width:87px">
<span class="n" style="left:3.2px;top:0.6px">284<i class="c">,</i>070</span>
</div>
<div class="cell" style="left:661px;width:64px">
<span class="n" style="left:3.2px;top:0.6px"><i>-</i>99</span>
</div>
</div>
<div class="row" style="top:176px;background:#fff">
<div class="cell" style="left:0px;width:81px">
<span class="n" style="left:3.2px;top:0.6px">2021<i>-</i>09</span>
</div>
<div class="cell" style="left:81px;width:55px">
<span class="n" style="left:3.2px;top:0.6px">0</span>
</div>
<div class="cell" style="left:136px;width:57px">
<span class="n" style="left:3.2px;top:0.6px">2</span>
</div>
<div class="cell" style="left:193px;width:58px">
<span class="n" style="left:3.2px;top:0.6px">0</span>
</div>
<div class="cell" style="left:251px;width:109px">
<span class="n" style="left:3.2px;top:0.6px">50<i class="c">,</i>590</span>
</div>
<div class="cell" style="left:360px;width:111px">
<span class="n" style="left:3.2px;top:0.6px">5<i class="c">,</i>100</span>
</div>
<div class="cell" style="left:471px;width:103px">
<span class="n" style="left:3.2px;top:0.6px">5<i class="c">,</i>000</span>
</div>
<div class="cell" style="left:574px;width:87px">
<span class="n" style="left:3.2px;top:0.6px">40<i class="c">,</i>490</span>
</div>
<div class="cell" style="left:661px;width:64px">
<span class="n" style="left:3.2px;top:0.6px"><i>-</i>99</span>
</div>
</div>
<div class="row" style="top:198px;background:#fff">
<div class="cell" style="left:0px;width:81px">
<span class="n" style="left:3.2px;top:0.6px">2021<i>-</i>10</span>
</div>
<div class="cell" style="left:81px;width:55px">
<span class="n" style="left:3.2px;top:0.6px">0</span>
</div>
<div class="cell" style="left:136px;width:57px">
<span class="n" style="left:3.2px;top:0.6px">3</span>
</div>
<div class="cell" style="left:193px;width:58px">
<span class="n" style="left:3.2px;top:0.6px">1</span>
</div>
<div class="cell" style="left:251px;width:109px">
<span class="n" style="left:3.2px;top:0.6px">329<i class="c">,</i>400</span>
</div>
<div class="cell" style="left:360px;width:111px">
<span class="n" style="left:3.2px;top:0.6px">72<i class="c">,</i>620</span>
</div>
<div class="cell" style="left:471px;width:103px">
<span class="n" style="left:3.2px;top:0.6px">0</span>
</div>
<div class="cell" style="left:574px;width:87px">
<span class="n" style="left:3.2px;top:0.6px">256<i class="c">,</i>780</span>
</div>
<div class="cell" style="left:661px;width:64px">
<span class="n" style="left:3.2px;top:0.6px"><i>-</i>97</span>
</div>
</div>
<div class="row" style="top:220px;background:#fff">
<div class="cell" style="left:0px;width:81px">
<svg class="kt " role="img" aria-label="합계" style="left:1.0px;top:1.0px" width="30" height="18" viewBox="0 0 30 18"><title>합계</title><text x="3" y="12" font-size="12" textLength="24" lengthAdjust="spacing">합계</text></svg>
</div>
<div class="cell" style="left:81px;width:55px">
<span class="n" style="left:3.2px;top:0.6px">186</span>
</div>
<div class="cell" style="left:136px;width:57px">
<span class="n" style="left:3.2px;top:0.6px">3<i class="c">,</i>115</span>
</div>
<div class="cell" style="left:193px;width:58px">
<span class="n" style="left:3.2px;top:0.6px">671</span>
</div>
<div class="cell" style="left:251px;width:109px">
<span class="n" style="left:3.2px;top:0.6px">212<i class="c">,</i>714<i class="c">,</i>124</span>
</div>
<div class="cell" style="left:360px;width:111px">
<span class="n" style="left:3.2px;top:0.6px">17<i class="c">,</i>352<i class="c">,</i>170</span>
</div>
<div class="cell" style="left:471px;width:103px">
<span class="n" style="left:3.2px;top:0.6px">23<i class="c">,</i>997<i class="c">,</i>414</span>
</div>
<div class="cell" style="left:574px;width:87px">
<span class="n" style="left:3.2px;top:0.6px">171<i class="c">,</i>364<i class="c">,</i>540</span>
</div>
<div class="cell" style="left:661px;width:64px">
<span class="n" style="left:3.2px;top:0.6px"><i>-</i>35</span>
</div>
</div>
</div>
<div class="a" style="left:170px;top:551px;width:1747px;height:448px;background:#fff;border:1px solid #d4d4d4"></div>
<div class="a" style="left:173px;top:555px;width:1742px;height:441px;background:#f0f0f0;border-right:2px solid #c0c0c0;border-bottom:2px solid #c0c0c0"></div>
<div class="a" style="left:170px;top:531px;width:105px;height:21px;background:#fff;border:1px solid #d4d4d4;border-bottom:none"></div>
<svg class="kt " role="img" aria-label="월별비교 그래프" style="left:175.0px;top:533.0px" width="96" height="18" viewBox="0 0 96 18"><title>월별비교 그래프</title><text x="3" y="12" font-size="12" textLength="90" lengthAdjust="spacing">월별비교 그래프</text></svg>
<svg class="a" style="left:180px;top:560px" width="24" height="20" viewBox="180 560 24 20" ><rect x="181.5" y="561.5" width="20" height="16.4" fill="#f2f2f2" stroke="#b4b4b4" stroke-width="1"/><path d="M185.4 563.4H198.4L199.4 565V576.2L198 577.4H185.8L184.4 576.2V565Z" fill="#4d88dc" stroke="#043a7c" stroke-width="1.1" stroke-linejoin="round"/><path d="M186.6 563.6H197.2V577H186.6Z" fill="none" stroke="#043a7c" stroke-width="1"/><rect x="187.2" y="564" width="9.6" height="7" fill="#ffff90"/><path d="M186.8 571.6H197" stroke="#043a7c" stroke-width="1"/><path d="M188.6 565.5H195.4M188.6 567.5H195.4M188.6 569.4H195.4" stroke="#9a9ab0" stroke-width=".6"/><path d="M188.8 565.5H190.8" stroke="#2a64d0" stroke-width=".8"/><rect x="187.2" y="575" width="9.4" height="2" fill="#f4f4f4"/></svg>
<svg class="a" style="left:0;top:0" width="1920" height="1038" viewBox="0 0 1920 1038"><defs><linearGradient id="gts" x1="0" x2="1" y1="0" y2="0"><stop offset="0" stop-color="#000"/><stop offset=".25" stop-color="#001c1c"/><stop offset="1" stop-color="#007272"/></linearGradient><linearGradient id="gtt" x1="0" x2="0" y1="0" y2="1"><stop offset="0" stop-color="#004a4a"/><stop offset="1" stop-color="#006e6e"/></linearGradient><linearGradient id="gps" x1="0" x2="1" y1="0" y2="0"><stop offset="0" stop-color="#7a0030"/><stop offset="1" stop-color="#d01868"/></linearGradient><linearGradient id="gpt" x1="0" x2="0" y1="0" y2="1"><stop offset="0" stop-color="#ec2a86"/><stop offset="1" stop-color="#a80050"/></linearGradient><linearGradient id="glb" x1="0" x2="0" y1="0" y2="1"><stop offset="0" stop-color="#ffffff"/><stop offset="1" stop-color="#ffffdc"/></linearGradient></defs><style>.ct{font-family:"Liberation Sans",sans-serif;font-size:10.67px;fill:#000;stroke:#000;stroke-width:.18px}</style><path d="M321.0 622.5H1862.0M321.0 648.2H1862.0M321.0 674.0H1862.0M321.0 699.8H1862.0M321.0 725.5H1862.0M321.0 751.3H1862.0M321.0 777.1H1862.0M321.0 802.9H1862.0M321.0 828.6H1862.0M321.0 854.4H1862.0M321.0 880.2H1862.0M321.0 905.9H1862.0" stroke="#d2d2d2" stroke-width="1.6" fill="none"/><path d="M429.4 596.0V931.0M595.0 596.0V931.0M760.6 596.0V931.0M926.2 596.0V931.0M1091.8 596.0V931.0M1257.4 596.0V931.0M1423.0 596.0V931.0M1588.6 596.0V931.0M1754.2 596.0V931.0" stroke="#cfcfcf" stroke-width="1.3" fill="none"/><path d="M321.0 595.5H1862.0V931.0" stroke="#5e5e5e" stroke-width="2" fill="none"/><polygon points="295.0,957.4 321.0,931.5 1862.0,931.5 1837.0,957.4" fill="#fff" stroke="#161616" stroke-width="1.1" stroke-linejoin="round"/><polygon points="295.0,622.0 321.0,596.0 321.0,931.0 295.0,957.0" fill="#ffff7e" stroke="#161616" stroke-width="1.3" stroke-linejoin="round"/><path d="M295.0 647.8L321.0 621.8M295.0 673.5L321.0 647.5M295.0 699.3L321.0 673.3M295.0 725.1L321.0 699.1M295.0 750.8L321.0 724.8M295.0 776.6L321.0 750.6M295.0 802.4L321.0 776.4M295.0 828.2L321.0 802.2M295.0 853.9L321.0 827.9M295.0 879.7L321.0 853.7M295.0 905.5L321.0 879.5M295.0 931.2L321.0 905.2" stroke="#cacaa4" stroke-width="1" fill="none"/><path d="M295.0 621.0V958.0" stroke="#000" stroke-width="2.4" fill="none"/><path d="M294.0 957.7H1837.0" stroke="#000" stroke-width="2.4" fill="none"/><text x="287" y="961.8" text-anchor="end" class="ct">0</text><text x="287" y="936.0" text-anchor="end" class="ct">5,000,000</text><text x="287" y="910.3" text-anchor="end" class="ct">10,000,000</text><text x="287" y="884.5" text-anchor="end" class="ct">15,000,000</text><text x="287" y="858.7" text-anchor="end" class="ct">20,000,000</text><text x="287" y="833.0" text-anchor="end" class="ct">25,000,000</text><text x="287" y="807.2" text-anchor="end" class="ct">30,000,000</text><text x="287" y="781.4" text-anchor="end" class="ct">35,000,000</text><text x="287" y="755.6" text-anchor="end" class="ct">40,000,000</text><text x="287" y="729.9" text-anchor="end" class="ct">45,000,000</text><text x="287" y="704.1" text-anchor="end" class="ct">50,000,000</text><text x="287" y="678.3" text-anchor="end" class="ct">55,000,000</text><text x="287" y="652.6" text-anchor="end" class="ct">60,000,000</text><text x="287" y="626.8" text-anchor="end" class="ct">65,000,000</text><path d="M290.0 957.0H294.0M290.0 931.2H294.0M290.0 905.5H294.0M290.0 879.7H294.0M290.0 853.9H294.0M290.0 828.2H294.0M290.0 802.4H294.0M290.0 776.6H294.0M290.0 750.8H294.0M290.0 725.1H294.0M290.0 699.3H294.0M290.0 673.5H294.0M290.0 647.8H294.0M290.0 622.0H294.0" stroke="#9a9a9a" stroke-width="1.4" fill="none"/><path d="M292.0 950.6H294.0M292.0 944.1H294.0M292.0 937.7H294.0M292.0 924.8H294.0M292.0 918.3H294.0M292.0 911.9H294.0M292.0 899.0H294.0M292.0 892.6H294.0M292.0 886.1H294.0M292.0 873.2H294.0M292.0 866.8H294.0M292.0 860.4H294.0M292.0 847.5H294.0M292.0 841.0H294.0M292.0 834.6H294.0M292.0 821.7H294.0M292.0 815.3H294.0M292.0 808.8H294.0M292.0 795.9H294.0M292.0 789.5H294.0M292.0 783.1H294.0M292.0 770.2H294.0M292.0 763.7H294.0M292.0 757.3H294.0M292.0 744.4H294.0M292.0 738.0H294.0M292.0 731.5H294.0M292.0 718.6H294.0M292.0 712.2H294.0M292.0 705.8H294.0M292.0 692.9H294.0M292.0 686.4H294.0M292.0 680.0H294.0M292.0 667.1H294.0M292.0 660.7H294.0M292.0 654.2H294.0M292.0 641.3H294.0M292.0 634.9H294.0M292.0 628.4H294.0" stroke="#a2a2a2" stroke-width="1.2" fill="none"/><path d="M403.4 959.0V964.0M569.0 959.0V964.0M734.6 959.0V964.0M900.2 959.0V964.0M1065.8 959.0V964.0M1231.4 959.0V964.0M1397.0 959.0V964.0M1562.6 959.0V964.0M1728.2 959.0V964.0" stroke="#9a9a9a" stroke-width="1.2" fill="none"/><path d="M320.6 959.0V962.0M362.0 959.0V962.0M444.8 959.0V962.0M486.2 959.0V962.0M527.6 959.0V962.0M610.4 959.0V962.0M651.8 959.0V962.0M693.2 959.0V962.0M776.0 959.0V962.0M817.4 959.0V962.0M858.8 959.0V962.0M941.6 959.0V962.0M983.0 959.0V962.0M1024.4 959.0V962.0M1107.2 959.0V962.0M1148.6 959.0V962.0M1190.0 959.0V962.0M1272.8 959.0V962.0M1314.2 959.0V962.0M1355.6 959.0V962.0M1438.4 959.0V962.0M1479.8 959.0V962.0M1521.2 959.0V962.0M1604.0 959.0V962.0M1645.4 959.0V962.0M1686.8 959.0V962.0M1769.6 959.0V962.0M1811.0 959.0V962.0" stroke="#9c9c9c" stroke-width="1" fill="none"/><text x="406" y="976" text-anchor="middle" class="ct">2021-01 ±-5</text><text x="572" y="976" text-anchor="middle" class="ct">2021-02 ±5</text><text x="737" y="976" text-anchor="middle" class="ct">2021-03 ±-3</text><text x="903" y="976" text-anchor="middle" class="ct">2021-04 ±-3</text><text x="1069" y="976" text-anchor="middle" class="ct">2021-05 ±-99</text><text x="1234" y="976" text-anchor="middle" class="ct">2021-07 ±-99</text><text x="1400" y="976" text-anchor="middle" class="ct">2021-08 ±-99</text><text x="1565" y="976" text-anchor="middle" class="ct">2021-09 ±-99</text><text x="1731" y="976" text-anchor="middle" class="ct">2021-10 ±-97</text><polygon points="386.2,701.7 412.2,675.7 412.2,931.0 386.2,957.0" fill="url(#gps)" stroke="#10181a" stroke-opacity=".75" stroke-width="1" stroke-linejoin="round"/><polygon points="350.0,701.7 386.2,701.7 412.2,675.7 376.0,675.7" fill="url(#gpt)" stroke="#10181a" stroke-opacity=".75" stroke-width="1" stroke-linejoin="round"/><rect x="350.0" y="701.7" width="36.25" height="255.3" fill="#f5338d" stroke="#10181a" stroke-opacity=".75" stroke-width="1" stroke-linejoin="round"/><polygon points="422.5,675.7 448.5,649.7 448.5,931.0 422.5,957.0" fill="url(#gts)" stroke="#10181a" stroke-opacity=".75" stroke-width="1" stroke-linejoin="round"/><polygon points="386.2,675.7 422.5,675.7 448.5,649.7 412.2,649.7" fill="url(#gtt)" stroke="#10181a" stroke-opacity=".75" stroke-width="1" stroke-linejoin="round"/><rect x="386.2" y="675.7" width="36.25" height="281.3" fill="#008080" stroke="#10181a" stroke-opacity=".75" stroke-width="1" stroke-linejoin="round"/><polygon points="551.9,683.3 577.9,657.3 577.9,931.0 551.9,957.0" fill="url(#gps)" stroke="#10181a" stroke-opacity=".75" stroke-width="1" stroke-linejoin="round"/><polygon points="515.6,683.3 551.9,683.3 577.9,657.3 541.6,657.3" fill="url(#gpt)" stroke="#10181a" stroke-opacity=".75" stroke-width="1" stroke-linejoin="round"/><rect x="515.6" y="683.3" width="36.25" height="273.7" fill="#f5338d" stroke="#10181a" stroke-opacity=".75" stroke-width="1" stroke-linejoin="round"/><polygon points="588.1,706.8 614.1,680.8 614.1,931.0 588.1,957.0" fill="url(#gts)" stroke="#10181a" stroke-opacity=".75" stroke-width="1" stroke-linejoin="round"/><polygon points="551.9,706.8 588.1,706.8 614.1,680.8 577.9,680.8" fill="url(#gtt)" stroke="#10181a" stroke-opacity=".75" stroke-width="1" stroke-linejoin="round"/><rect x="551.9" y="706.8" width="36.25" height="250.2" fill="#008080" stroke="#10181a" stroke-opacity=".75" stroke-width="1" stroke-linejoin="round"/><polygon points="717.5,676.9 743.5,650.9 743.5,931.0 717.5,957.0" fill="url(#gps)" stroke="#10181a" stroke-opacity=".75" stroke-width="1" stroke-linejoin="round"/><polygon points="681.2,676.9 717.5,676.9 743.5,650.9 707.2,650.9" fill="url(#gpt)" stroke="#10181a" stroke-opacity=".75" stroke-width="1" stroke-linejoin="round"/><rect x="681.2" y="676.9" width="36.25" height="280.1" fill="#f5338d" stroke="#10181a" stroke-opacity=".75" stroke-width="1" stroke-linejoin="round"/><polygon points="753.7,657.2 779.7,631.2 779.7,931.0 753.7,957.0" fill="url(#gts)" stroke="#10181a" stroke-opacity=".75" stroke-width="1" stroke-linejoin="round"/><polygon points="717.5,657.2 753.7,657.2 779.7,631.2 743.5,631.2" fill="url(#gtt)" stroke="#10181a" stroke-opacity=".75" stroke-width="1" stroke-linejoin="round"/><rect x="717.5" y="657.2" width="36.25" height="299.8" fill="#008080" stroke="#10181a" stroke-opacity=".75" stroke-width="1" stroke-linejoin="round"/><polygon points="883.0,674.3 909.0,648.3 909.0,931.0 883.0,957.0" fill="url(#gps)" stroke="#10181a" stroke-opacity=".75" stroke-width="1" stroke-linejoin="round"/><polygon points="846.8,674.3 883.0,674.3 909.0,648.3 872.8,648.3" fill="url(#gpt)" stroke="#10181a" stroke-opacity=".75" stroke-width="1" stroke-linejoin="round"/><rect x="846.8" y="674.3" width="36.25" height="282.7" fill="#f5338d" stroke="#10181a" stroke-opacity=".75" stroke-width="1" stroke-linejoin="round"/><polygon points="919.3,661.5 945.3,635.5 945.3,931.0 919.3,957.0" fill="url(#gts)" stroke="#10181a" stroke-opacity=".75" stroke-width="1" stroke-linejoin="round"/><polygon points="883.0,661.5 919.3,661.5 945.3,635.5 909.0,635.5" fill="url(#gtt)" stroke="#10181a" stroke-opacity=".75" stroke-width="1" stroke-linejoin="round"/><rect x="883.0" y="661.5" width="36.25" height="295.5" fill="#008080" stroke="#10181a" stroke-opacity=".75" stroke-width="1" stroke-linejoin="round"/><polygon points="1048.7,956.7 1074.7,930.7 1074.7,931.0 1048.7,957.0" fill="url(#gps)" stroke="#10181a" stroke-opacity=".75" stroke-width="1" stroke-linejoin="round"/><polygon points="1012.4,956.7 1048.7,956.7 1074.7,930.7 1038.4,930.7" fill="url(#gpt)" stroke="#10181a" stroke-opacity=".75" stroke-width="1" stroke-linejoin="round"/><polygon points="1084.9,671.0 1110.9,645.0 1110.9,931.0 1084.9,957.0" fill="url(#gts)" stroke="#10181a" stroke-opacity=".75" stroke-width="1" stroke-linejoin="round"/><polygon points="1048.7,671.0 1084.9,671.0 1110.9,645.0 1074.7,645.0" fill="url(#gtt)" stroke="#10181a" stroke-opacity=".75" stroke-width="1" stroke-linejoin="round"/><rect x="1048.7" y="671.0" width="36.25" height="286.0" fill="#008080" stroke="#10181a" stroke-opacity=".75" stroke-width="1" stroke-linejoin="round"/><polygon points="1214.2,956.8 1240.2,930.8 1240.2,931.0 1214.2,957.0" fill="url(#gps)" stroke="#10181a" stroke-opacity=".75" stroke-width="1" stroke-linejoin="round"/><polygon points="1178.0,956.8 1214.2,956.8 1240.2,930.8 1204.0,930.8" fill="url(#gpt)" stroke="#10181a" stroke-opacity=".75" stroke-width="1" stroke-linejoin="round"/><polygon points="1250.5,721.4 1276.5,695.4 1276.5,931.0 1250.5,957.0" fill="url(#gts)" stroke="#10181a" stroke-opacity=".75" stroke-width="1" stroke-linejoin="round"/><polygon points="1214.2,721.4 1250.5,721.4 1276.5,695.4 1240.2,695.4" fill="url(#gtt)" stroke="#10181a" stroke-opacity=".75" stroke-width="1" stroke-linejoin="round"/><rect x="1214.2" y="721.4" width="36.25" height="235.6" fill="#008080" stroke="#10181a" stroke-opacity=".75" stroke-width="1" stroke-linejoin="round"/><polygon points="1379.8,955.0 1405.8,929.0 1405.8,931.0 1379.8,957.0" fill="url(#gps)" stroke="#10181a" stroke-opacity=".75" stroke-width="1" stroke-linejoin="round"/><polygon points="1343.6,955.0 1379.8,955.0 1405.8,929.0 1369.6,929.0" fill="url(#gpt)" stroke="#10181a" stroke-opacity=".75" stroke-width="1" stroke-linejoin="round"/><rect x="1343.6" y="955.0" width="36.25" height="2.0" fill="#f5338d" stroke="#10181a" stroke-opacity=".75" stroke-width="1" stroke-linejoin="round"/><polygon points="1416.1,690.2 1442.1,664.2 1442.1,931.0 1416.1,957.0" fill="url(#gts)" stroke="#10181a" stroke-opacity=".75" stroke-width="1" stroke-linejoin="round"/><polygon points="1379.8,690.2 1416.1,690.2 1442.1,664.2 1405.8,664.2" fill="url(#gtt)" stroke="#10181a" stroke-opacity=".75" stroke-width="1" stroke-linejoin="round"/><rect x="1379.8" y="690.2" width="36.25" height="266.8" fill="#008080" stroke="#10181a" stroke-opacity=".75" stroke-width="1" stroke-linejoin="round"/><polygon points="1545.5,956.7 1571.5,930.7 1571.5,931.0 1545.5,957.0" fill="url(#gps)" stroke="#10181a" stroke-opacity=".75" stroke-width="1" stroke-linejoin="round"/><polygon points="1509.2,956.7 1545.5,956.7 1571.5,930.7 1535.2,930.7" fill="url(#gpt)" stroke="#10181a" stroke-opacity=".75" stroke-width="1" stroke-linejoin="round"/><polygon points="1581.7,726.4 1607.7,700.4 1607.7,931.0 1581.7,957.0" fill="url(#gts)" stroke="#10181a" stroke-opacity=".75" stroke-width="1" stroke-linejoin="round"/><polygon points="1545.5,726.4 1581.7,726.4 1607.7,700.4 1571.5,700.4" fill="url(#gtt)" stroke="#10181a" stroke-opacity=".75" stroke-width="1" stroke-linejoin="round"/><rect x="1545.5" y="726.4" width="36.25" height="230.6" fill="#008080" stroke="#10181a" stroke-opacity=".75" stroke-width="1" stroke-linejoin="round"/><polygon points="1711.0,955.3 1737.0,929.3 1737.0,931.0 1711.0,957.0" fill="url(#gps)" stroke="#10181a" stroke-opacity=".75" stroke-width="1" stroke-linejoin="round"/><polygon points="1674.8,955.3 1711.0,955.3 1737.0,929.3 1700.8,929.3" fill="url(#gpt)" stroke="#10181a" stroke-opacity=".75" stroke-width="1" stroke-linejoin="round"/><rect x="1674.8" y="955.3" width="36.25" height="1.7" fill="#f5338d" stroke="#10181a" stroke-opacity=".75" stroke-width="1" stroke-linejoin="round"/><polygon points="1747.3,859.3 1773.3,833.3 1773.3,931.0 1747.3,957.0" fill="url(#gts)" stroke="#10181a" stroke-opacity=".75" stroke-width="1" stroke-linejoin="round"/><polygon points="1711.0,859.3 1747.3,859.3 1773.3,833.3 1737.0,833.3" fill="url(#gtt)" stroke="#10181a" stroke-opacity=".75" stroke-width="1" stroke-linejoin="round"/><rect x="1711.0" y="859.3" width="36.25" height="97.7" fill="#008080" stroke="#10181a" stroke-opacity=".75" stroke-width="1" stroke-linejoin="round"/><path d="M379.8 670V688.7" stroke="#f0f0f0" stroke-width="1.2"/><rect x="346" y="654.5" width="73" height="18" rx="3" fill="#000" fill-opacity=".28"/><rect x="344" y="652" width="73" height="18" rx="3" fill="url(#glb)" stroke="#4a4a4a" stroke-width="1"/><text x="348.5" y="664.6" class="ct">49,539,138</text><path d="M416.1 644V662.7" stroke="#e8e8e8" stroke-width="1.2"/><rect x="381.5" y="628.5" width="73" height="18" rx="3" fill="#000" fill-opacity=".28"/><rect x="379.5" y="626" width="73" height="18" rx="3" fill="url(#glb)" stroke="#4a4a4a" stroke-width="1"/><text x="444.5" y="638.6" text-anchor="end" class="ct">54,576,894</text><path d="M545.4 652V670.3" stroke="#f0f0f0" stroke-width="1.2"/><rect x="512" y="636.5" width="73" height="18" rx="3" fill="#000" fill-opacity=".28"/><rect x="510" y="634" width="73" height="18" rx="3" fill="url(#glb)" stroke="#4a4a4a" stroke-width="1"/><text x="514.5" y="646.6" class="ct">53,101,989</text><path d="M581.7 675.7V693.8" stroke="#e8e8e8" stroke-width="1.2"/><rect x="548.3" y="660.2" width="73" height="18" rx="3" fill="#000" fill-opacity=".28"/><rect x="546.3" y="657.7" width="73" height="18" rx="3" fill="url(#glb)" stroke="#4a4a4a" stroke-width="1"/><text x="611.3" y="670.3000000000001" text-anchor="end" class="ct">48,554,970</text><path d="M711.0 646V663.9" stroke="#f0f0f0" stroke-width="1.2"/><rect x="676.8" y="630.5" width="73" height="18" rx="3" fill="#000" fill-opacity=".28"/><rect x="674.8" y="628" width="73" height="18" rx="3" fill="url(#glb)" stroke="#4a4a4a" stroke-width="1"/><text x="679.3" y="640.6" class="ct">54,356,925</text><path d="M747.3 626V644.2" stroke="#e8e8e8" stroke-width="1.2"/><rect x="713" y="610.5" width="73" height="18" rx="3" fill="#000" fill-opacity=".28"/><rect x="711" y="608" width="73" height="18" rx="3" fill="url(#glb)" stroke="#4a4a4a" stroke-width="1"/><text x="776" y="620.6" text-anchor="end" class="ct">58,162,410</text><path d="M876.6 643V661.3" stroke="#f0f0f0" stroke-width="1.2"/><rect x="843" y="627.5" width="73" height="18" rx="3" fill="#000" fill-opacity=".28"/><rect x="841" y="625" width="73" height="18" rx="3" fill="url(#glb)" stroke="#4a4a4a" stroke-width="1"/><text x="845.5" y="637.6" class="ct">54,852,774</text><path d="M912.9 630V648.5" stroke="#e8e8e8" stroke-width="1.2"/><rect x="879" y="614.5" width="73" height="18" rx="3" fill="#000" fill-opacity=".28"/><rect x="877" y="612" width="73" height="18" rx="3" fill="url(#glb)" stroke="#4a4a4a" stroke-width="1"/><text x="942" y="624.6" text-anchor="end" class="ct">57,340,158</text><path d="M1042.2 926V943.7" stroke="#f0f0f0" stroke-width="1.2"/><rect x="1019.6" y="910.5" width="51.3" height="18" rx="3" fill="#000" fill-opacity=".28"/><rect x="1017.6" y="908" width="51.3" height="18" rx="3" fill="url(#glb)" stroke="#4a4a4a" stroke-width="1"/><text x="1022.1" y="920.6" class="ct">62,368</text><path d="M1078.5 640V658.0" stroke="#e8e8e8" stroke-width="1.2"/><rect x="1045" y="624.5" width="73" height="18" rx="3" fill="#000" fill-opacity=".28"/><rect x="1043" y="622" width="73" height="18" rx="3" fill="url(#glb)" stroke="#4a4a4a" stroke-width="1"/><text x="1108" y="634.6" text-anchor="end" class="ct">55,497,934</text><path d="M1207.8 926V943.8" stroke="#f0f0f0" stroke-width="1.2"/><rect x="1185" y="910.5" width="51.3" height="18" rx="3" fill="#000" fill-opacity=".28"/><rect x="1183" y="908" width="51.3" height="18" rx="3" fill="url(#glb)" stroke="#4a4a4a" stroke-width="1"/><text x="1187.5" y="920.6" class="ct">37,570</text><path d="M1244.1 690V708.4" stroke="#e8e8e8" stroke-width="1.2"/><rect x="1210" y="674.5" width="73" height="18" rx="3" fill="#000" fill-opacity=".28"/><rect x="1208" y="672" width="73" height="18" rx="3" fill="url(#glb)" stroke="#4a4a4a" stroke-width="1"/><text x="1273" y="684.6" text-anchor="end" class="ct">45,711,490</text><path d="M1373.4 924V942.0" stroke="#f0f0f0" stroke-width="1.2"/><rect x="1348" y="908.5" width="57" height="18" rx="3" fill="#000" fill-opacity=".28"/><rect x="1346" y="906" width="57" height="18" rx="3" fill="url(#glb)" stroke="#4a4a4a" stroke-width="1"/><text x="1350.5" y="918.6" class="ct">383,370</text><path d="M1409.7 659V677.2" stroke="#e8e8e8" stroke-width="1.2"/><rect x="1376" y="643.5" width="73" height="18" rx="3" fill="#000" fill-opacity=".28"/><rect x="1374" y="641" width="73" height="18" rx="3" fill="url(#glb)" stroke="#4a4a4a" stroke-width="1"/><text x="1439" y="653.6" text-anchor="end" class="ct">51,761,240</text><path d="M1539.0 926V943.7" stroke="#f0f0f0" stroke-width="1.2"/><rect x="1516" y="910.5" width="51.3" height="18" rx="3" fill="#000" fill-opacity=".28"/><rect x="1514" y="908" width="51.3" height="18" rx="3" fill="url(#glb)" stroke="#4a4a4a" stroke-width="1"/><text x="1518.5" y="920.6" class="ct">50,590</text><path d="M1575.3 695V713.4" stroke="#e8e8e8" stroke-width="1.2"/><rect x="1541" y="679.5" width="73" height="18" rx="3" fill="#000" fill-opacity=".28"/><rect x="1539" y="677" width="73" height="18" rx="3" fill="url(#glb)" stroke="#4a4a4a" stroke-width="1"/><text x="1604" y="689.6" text-anchor="end" class="ct">44,742,586</text><path d="M1704.6 924V942.3" stroke="#f0f0f0" stroke-width="1.2"/><rect x="1679" y="908.5" width="57" height="18" rx="3" fill="#000" fill-opacity=".28"/><rect x="1677" y="906" width="57" height="18" rx="3" fill="url(#glb)" stroke="#4a4a4a" stroke-width="1"/><text x="1681.5" y="918.6" class="ct">329,400</text><path d="M1740.9 828V846.3" stroke="#e8e8e8" stroke-width="1.2"/><rect x="1707" y="812.5" width="73" height="18" rx="3" fill="#000" fill-opacity=".28"/><rect x="1705" y="810" width="73" height="18" rx="3" fill="url(#glb)" stroke="#4a4a4a" stroke-width="1"/><text x="1770" y="822.6" text-anchor="end" class="ct">18,950,830</text></svg>
<svg class="kt " role="img" aria-label="월별비교" style="left:1015.0px;top:570.0px" width="69" height="21" viewBox="0 0 69 21"><title>월별비교</title><text x="3" y="14.5" font-size="15.75" textLength="63" lengthAdjust="spacing" style="fill:#1010d8" stroke="#1010d8" stroke-width=".35">월별비교</text></svg>
<div class="a" style="left:0;top:1002px;width:1920px;height:36px;background:#08af24"></div>
<div class="a" style="left:1734px;top:1001px;width:186px;height:37px;background:linear-gradient(#fff,#f4f4f4 40%,#d9d9d9)"></div>
<svg class="a" style="left:1755px;top:1003px" width="26" height="23" viewBox="1755 1003 26 23" ><path d="M1757.1 1022V1008.6Q1757.3 1005.2 1760.4 1005H1774.3V1010" fill="#f4faf0" stroke="#5cb83c" stroke-width="1.2" stroke-linejoin="round"/><path d="M1758.6 1021.8V1009.4Q1758.8 1007 1761 1006.8H1772.6" fill="none" stroke="#b4c8b0" stroke-width=".7"/><path d="M1776.6 1010V1023.6L1765 1022.2" fill="none" stroke="#2a2a2a" stroke-width="1" stroke-opacity=".8"/><path d="M1760.5 1008.9L1776 1009.4L1775.4 1023.5L1757.9 1021.2Z" fill="#fdfefb" stroke="#dfe8da" stroke-width=".5"/><path d="M1768.6 1011L1762 1015.2" stroke="#5aa83c" stroke-width="1.7"/><path d="M1762.2 1010.6L1768.2 1015.8" stroke="#1e6a10" stroke-width="2.1"/><path d="M1770.8 1011.3H1774.3V1013H1770.8ZM1770.6 1015H1774.2V1016.8H1770.6ZM1770.3 1018.9H1774V1020.9H1770.3Z" fill="#3c9a30"/><path d="M1760.2 1017.4H1763.6V1019.2H1760.2ZM1765.1 1017.8H1768.6V1019.8H1765.1Z" fill="#62ac4a"/></svg>
<svg class="kt " role="img" aria-label="엑셀 저장" style="left:1737.4px;top:1021.8px" width="61" height="18" viewBox="0 0 61 18"><title>엑셀 저장</title><text x="3" y="12" font-size="12" textLength="55" lengthAdjust="spacing">엑셀 저장</text></svg>
<svg class="a" style="left:1816px;top:1003px" width="24" height="23" viewBox="1816 1003 24 23" ><defs><linearGradient id="prg" x1="0" y1="0" x2="1" y2="1"><stop offset="0" stop-color="#8c7ce0"/><stop offset=".55" stop-color="#7464c8"/><stop offset=".8" stop-color="#15151c"/></linearGradient></defs><path d="M1819.9 1009.2L1825.8 1005.1L1827.6 1007L1822.2 1012Z" fill="#eef4fd" stroke="#bcd0f4" stroke-width=".8" stroke-linejoin="round"/><path d="M1818.2 1013.3L1822.2 1011.4L1828 1009L1834 1012.6V1016.8L1825.6 1021.8L1818.2 1019.4Z" fill="#ebebf0" stroke="#c4c4cc" stroke-width=".6" stroke-linejoin="round"/><path d="M1818.2 1013.4L1825.6 1016.8V1021.7L1818.2 1019.4Z" fill="#f7f7fa"/><path d="M1822.3 1012.7L1828 1009.3L1832.3 1012.7L1826.6 1016.2Z" fill="url(#prg)"/><path d="M1826.9 1019.7L1832.8 1017.3L1837.4 1021.3L1831.5 1023.7Z" fill="#dce8fa" stroke="#4a78c8" stroke-width=".9" stroke-linejoin="round"/><ellipse cx="1830.6" cy="1020" rx="1.5" ry="1" fill="#f08a18" transform="rotate(20 1830.6 1020)"/><path d="M1831.6 1020.6L1834.2 1019.8L1835 1021L1832.6 1022.4Z" fill="#3cb03c"/></svg>
<svg class="kt " role="img" aria-label="인쇄" style="left:1813.5px;top:1021.8px" width="30" height="18" viewBox="0 0 30 18"><title>인쇄</title><text x="3" y="12" font-size="12" textLength="24" lengthAdjust="spacing">인쇄</text></svg>
<svg class="a" style="left:1879px;top:1005px" width="20" height="20" viewBox="1879 1005 20 20" ><path d="M1882.4 1008.6L1895.2 1021.6M1895.4 1008.4L1882.2 1021.8" stroke="#e8808a" stroke-width="3" stroke-linecap="butt"/></svg>
<svg class="kt " role="img" aria-label="닫기" style="left:1874.5px;top:1021.8px" width="30" height="18" viewBox="0 0 30 18"><title>닫기</title><text x="3" y="12" font-size="12" textLength="24" lengthAdjust="spacing">닫기</text></svg>
</body></html>
